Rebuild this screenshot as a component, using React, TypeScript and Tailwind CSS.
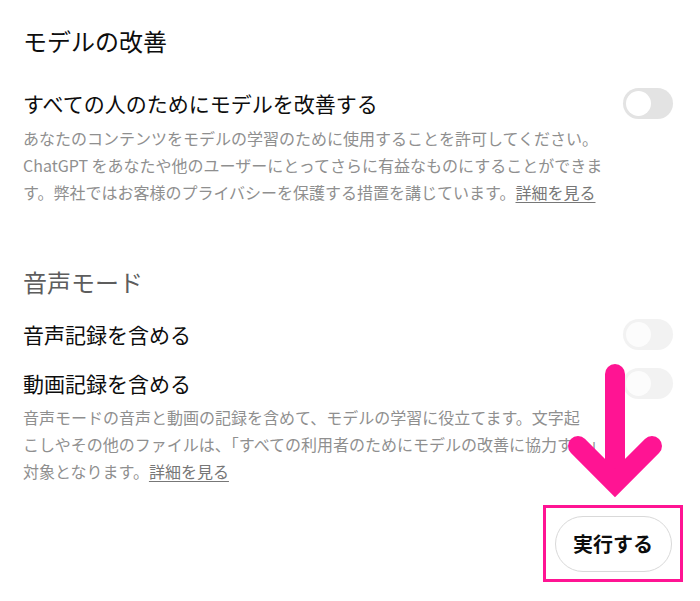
import React from 'react';

const FONT = "font-['Segoe_UI','Noto_Sans_CJK_JP',sans-serif]";

const Toggle: React.FC<{ disabled?: boolean }> = ({ disabled }) => (
  <div
    className={`w-[50px] h-[31px] rounded-full flex items-center px-[3px] shrink-0 ${
      disabled ? 'bg-[#f2f2f2]' : 'bg-[#e3e3e3]'
    }`}
  >
    <div className={`w-[25px] h-[25px] rounded-full ${disabled ? 'bg-[#fcfcfc]' : 'bg-white'}`} />
  </div>
);

const Link: React.FC<{ children: React.ReactNode }> = ({ children }) => (
  <span className="underline underline-offset-[3px] text-[#777]">{children}</span>
);

const App: React.FC = () => {
  return (
    <div className={`relative w-[700px] h-[601px] bg-white overflow-hidden ${FONT}`}>
      <div className="pl-[23px] pr-[27px] pt-[25px]">
        {/* モデルの改善 */}
        <h2 className="text-[24px] leading-[32px] text-[#0d0d0d]">モデルの改善</h2>

        <div className="mt-[31px] flex items-center justify-between">
          <span className="text-[21px] leading-[31px] text-[#0d0d0d]">すべての人のためにモデルを改善する</span>
          <Toggle />
        </div>
        <p className="mt-[6px] text-[16px] leading-[27px] text-[#8f8f8f]">
          あなたのコンテンツをモデルの学習のために使用することを許可してください。
          <br />
          ChatGPT をあなたや他のユーザーにとってさらに有益なものにすることができま
          <br />
          す。弊社ではお客様のプライバシーを保護する措置を講じています。<Link>詳細を見る</Link>
        </p>

        {/* 音声モード */}
        <h2 className="mt-[60px] text-[24px] leading-[32px] text-[#5d5d5d]">音声モード</h2>

        <div className="mt-[21px] flex items-center justify-between">
          <span className="text-[21px] leading-[31px] text-[#0d0d0d]">音声記録を含める</span>
          <Toggle disabled />
        </div>
        <div className="mt-[18px] flex items-center justify-between">
          <span className="text-[21px] leading-[31px] text-[#0d0d0d]">動画記録を含める</span>
          <Toggle disabled />
        </div>
        <p className="mt-[5px] text-[16px] leading-[27px] text-[#8f8f8f] whitespace-nowrap">
          音声モードの音声と動画の記録を含めて、モデルの学習に役立てます。文字起
          <br />
          こしやその他のファイルは、「すべての利用者のためにモデルの改善に協力する」の
          <br />
          対象となります。<Link>詳細を見る</Link>
        </p>
      </div>

      <div className="flex justify-end pr-[17px] mt-[20px]">
        <div className="border-[3px] border-[#ff1493] w-[140px] h-[77px] flex items-center justify-center">
          <button className="w-[117px] h-[56px] rounded-full border border-[#d9d9d9] bg-white text-[20px] font-semibold text-[#0d0d0d]">
            実行する
          </button>
        </div>
      </div>

      {/* annotation arrow */}
      <svg className="absolute left-0 top-0 pointer-events-none" width="700" height="601">
        <line x1="615" y1="374" x2="615" y2="482" stroke="#ff1493" strokeWidth="20" strokeLinecap="round" />
        <polyline
          points="578,446 615,483 652,446"
          fill="none"
          stroke="#ff1493"
          strokeWidth="20"
          strokeLinecap="round"
          strokeLinejoin="miter"
        />
      </svg>
    </div>
  );
};

export default App;
